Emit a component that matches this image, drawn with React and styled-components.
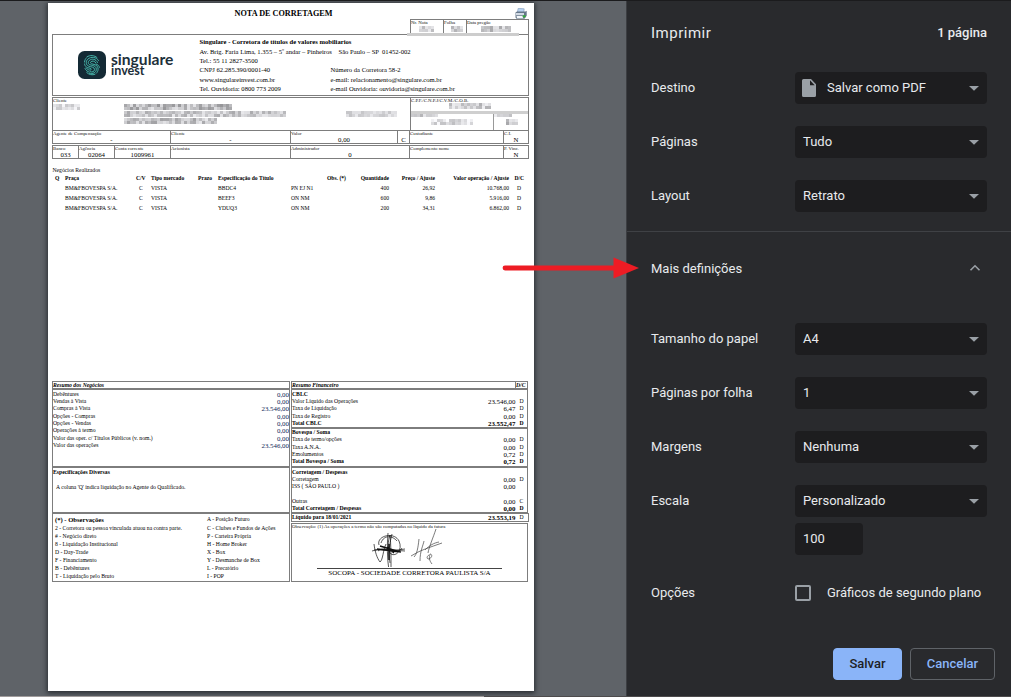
import React from "react";
import styled, { createGlobalStyle } from "styled-components";

const GlobalStyle = createGlobalStyle`
  * { box-sizing: border-box; }
  body { margin: 0; overflow: hidden; background: #5f6368; }
`;

const line = "#7d7d7d";

const Window = styled.div`
  position: relative;
  width: 1011px;
  height: 697px;
  display: grid;
  grid-template-columns: 626px 385px;
  grid-template-rows: 695px 1px;
  border-top: 1px solid #1b1b1d;
  overflow: hidden;
`;

const Preview = styled.main`
  background: #5f6368;
  padding: 2px 0 0 48px;
  overflow: hidden;
`;

const StatusLight = styled.div`
  background: linear-gradient(to right, #a09c9c 484px, #4d4b4c 484px);
`;
const StatusDark = styled.div`
  background: #4d4b4c;
`;

const Sheet = styled.article`
  position: relative;
  width: 486px;
  height: 688px;
  padding-left: 4px;
  background: #fff;
  color: #000;
  box-shadow: 0 1px 5px 1px rgba(20, 24, 28, 0.75);
  font-family: "Liberation Serif", serif;
  font-size: 5.68px;
  display: flex;
  flex-direction: column;
`;

const TitleRow = styled.header`
  display: grid;
  grid-template-columns: 463px 14px;
  height: 16px;
`;
const Title = styled.h1`
  margin: 0;
  padding-top: 6px;
  text-align: center;
  font-size: 8.2px;
  line-height: 9px;
  color: #000;
`;

const Row = styled.div`
  display: grid;
  grid-template-columns: ${(p) => p.$cols};
  width: ${(p) => p.$w || 477}px;
  height: ${(p) => p.$h}px;
  margin-left: ${(p) => p.$ml || 0}px;
  margin-top: ${(p) => p.$mt || 0}px;
`;

const Cell = styled.div`
  min-width: 0;
  border: 1px solid ${line};
  border-left-width: ${(p) => (p.$noLeft ? 0 : 1)}px;
  border-bottom-width: ${(p) => (p.$open ? 0 : 1)}px;
  white-space: nowrap;
`;

const Tiny = styled.div`
  font-size: 4.85px;
  line-height: 5px;
  height: 5px;
  white-space: nowrap;
  color: #111;
`;
const Value = styled.div`
  font-size: 6.8px;
  line-height: 7px;
  text-align: center;
`;

const Text = styled.div`
  font-size: ${(p) => p.$size || 5.68}px;
  line-height: ${(p) => p.$lh || 7.35}px;
  height: ${(p) => p.$lh || 7.35}px;
  font-weight: ${(p) => (p.$b ? 700 : 400)};
  font-style: ${(p) => (p.$i ? "italic" : "normal")};
  padding-left: ${(p) => p.$pl || 0}px;
  margin-top: ${(p) => p.$mt || 0}px;
  white-space: pre;
`;

const Letterhead = styled.div`
  display: grid;
  grid-template-columns: 146.5px 1fr;
  width: 477px;
  height: 62px;
  border: 1px solid ${line};
`;
const Brand = styled.div`
  display: flex;
  align-items: flex-start;
  padding: 16px 0 0 25px;
  gap: 5px;
`;
const Wordmark = styled.div`
  font-family: Lato, sans-serif;
  font-weight: 700;
  color: #1d2f3a;
  padding-top: 2px;
`;
const WordTop = styled.div`
  font-size: 15.6px;
  line-height: 13px;
`;
const WordBottom = styled.div`
  font-size: 12.6px;
  line-height: 9px;
`;
const RedactionBar = styled.div`
  position: absolute;
  left: 359px;
  top: 30px;
  width: 112px;
  height: 3px;
  background: #cdcdcd;
`;

const Columns = styled.div`
  display: grid;
  grid-template-columns: ${(p) => p.$cols};
`;

const ClientFields = styled.div`
  display: grid;
  grid-template-columns: 71px 222px 64px;
`;
const RedactedStack = styled.div`
  padding-top: ${(p) => p.$pt || 0}px;
  padding-left: ${(p) => p.$pl || 0}px;
  display: flex;
  flex-direction: column;
  gap: 1px;
  svg { display: block; }
`;
const DocFields = styled.div`
  height: 16px;
  border-bottom: 3px solid #cfcfcf;
`;
const NumberFields = styled.div`
  display: grid;
  grid-template-columns: 82px 1fr;
  height: 16px;
  & > div + div { border-left: 1px solid #999; }
`;

const Trades = styled.section`
  margin-top: 7.5px;
  height: 214px;
`;
const TradeRow = styled.div`
  display: grid;
  grid-template-columns: 13px 71px 15px 47px 20px 73px 36px 62px 46px 74px 19px;
  font-size: 5.6px;
  line-height: 10px;
  height: 10px;
  margin-top: ${(p) => (p.$head ? -0.6 : 0)}px;
  font-weight: ${(p) => (p.$head ? 700 : 400)};
  white-space: nowrap;
`;
const Td = styled.span`
  display: flex;
  justify-content: ${(p) => (p.$r ? "flex-end" : "flex-start")};
  padding-left: ${(p) => p.$pl || 0}px;
`;

const Summary = styled.section`
  display: grid;
  grid-template-columns: 238px 237px;
  gap: 1px;
`;
const Side = styled.div`
  display: flex;
  flex-direction: column;
`;
const Panel = styled.div`
  height: ${(p) => p.$h}px;
  width: ${(p) => (p.$wide ? "238px" : "auto")};
  margin-top: ${(p) => p.$mt || 0}px;
  border: 1px solid ${line};
  padding-top: ${(p) => p.$pt || 0}px;
  white-space: nowrap;
`;
const Entry = styled.div`
  display: grid;
  grid-template-columns: ${(p) => (p.$dc ? "173.5px 50px 11.5px" : "1fr 50px")};
  height: ${(p) => p.$lh || 7.35}px;
  line-height: ${(p) => p.$lh || 7.35}px;
  margin-top: ${(p) => p.$mt || 0}px;
  font-weight: ${(p) => (p.$b ? 700 : 400)};
`;
const Amount = styled.span`
  font-size: 6.9px;
  text-align: right;
  color: ${(p) => (p.$blue ? "#0c1e58" : "#000")};
`;
const Flag = styled.span`
  padding-left: 4px;
  font-weight: ${(p) => (p.$plain ? 400 : "inherit")};
`;
const SignArea = styled.div`
  display: flex;
  flex-direction: column;
  align-items: center;
  height: 52px;
`;
const SignLine = styled.div`
  width: 185px;
  margin-top: 1px;
  border-top: 1px solid #444;
  text-align: center;
  font-size: 7px;
  line-height: 8px;
`;

const Sidebar = styled.aside`
  background: #292a2d;
  border-left: 1px solid #3c3e42;
  color: #e8eaed;
  font-family: Roboto, sans-serif;
  font-size: 13px;
  padding: 0 24px;
  display: flex;
  flex-direction: column;
`;
const PanelHead = styled.div`
  height: 60px;
  padding-top: 3px;
  display: flex;
  align-items: center;
  justify-content: space-between;
`;
const PanelTitle = styled.h2`
  margin: 0;
  font-size: 15px;
  font-weight: 400;
  letter-spacing: 0.5px;
`;
const PageCount = styled.span`
  font-weight: 500;
`;
const Label = styled.span`
  padding-bottom: 2px;
`;
const Setting = styled.div`
  display: grid;
  grid-template-columns: 144px 192px;
  align-items: center;
  height: 54px;
`;
const Select = styled.div`
  height: 32px;
  border-radius: 4px;
  background: #1d1d1f;
  display: flex;
  align-items: center;
  padding: 0 8px;
  width: ${(p) => p.$w || 192}px;
  svg { flex: none; }
`;
const SelectText = styled.span`
  flex: 1;
  padding-bottom: 2px;
  padding-left: ${(p) => p.$pl || 0}px;
`;
const Divider = styled.hr`
  width: 384px;
  margin: 8px 0 0 -24px;
  border: 0;
  flex: none;
  height: 1px;
  background: #3f4145;
`;
const MoreRow = styled.div`
  height: 80px;
  padding: 0 6px 7px 0;
  display: flex;
  align-items: center;
  justify-content: space-between;
  svg { margin-top: -2px; }
`;
const ScaleInput = styled.div`
  padding-left: 144px;
  margin-top: -5px;
`;
const Options = styled(Setting)`
  margin-top: 11px;
`;
const Option = styled.div`
  display: flex;
  align-items: center;
  gap: 16px;
  padding-bottom: 1px;
  white-space: nowrap;
`;
const Checkbox = styled.span`
  width: 16px;
  height: 16px;
  border: 2px solid #9aa0a6;
  border-radius: 2px;
`;
const Actions = styled.div`
  display: flex;
  justify-content: flex-end;
  gap: 8px;
  margin: 28px -8px 0 0;
`;
const Button = styled.button`
  font: 500 13px Roboto, sans-serif;
  height: 32px;
  width: ${(p) => (p.$primary ? 69 : 85)}px;
  padding: 0 0 2px;
  border-radius: 4px;
  border: 1px solid ${(p) => (p.$primary ? "#8ab4f8" : "#5f6368")};
  background: ${(p) => (p.$primary ? "#8ab4f8" : "transparent")};
  color: ${(p) => (p.$primary ? "#202124" : "#8ab4f8")};
`;

const Arrow = styled.svg`
  position: absolute;
  left: 500px;
  top: 253px;
`;

function Mosaic({ w, h = 6, seed = 1, dark = 150, bg = 225 }) {
  const size = 3;
  const cells = [];
  let s = seed * 7919;
  for (let y = 0; y < h; y += size) {
    for (let x = 0; x < w; x += size) {
      s = (s * 1103515245 + 12345) % 2147483648;
      const v = Math.min(255, Math.round(dark + (s / 2147483648) * (bg - dark + 10)));
      cells.push(
        <rect key={x + "-" + y} x={x} y={y} width={size} height={size}
          fill={`rgb(${v},${v},${Math.min(v + 3, 255)})`} />
      );
    }
  }
  return <svg width={w} height={h} shapeRendering="crispEdges">{cells}</svg>;
}

const Logo = () => (
  <svg width="28" height="28" viewBox="0 0 28 28" fill="none">
    <rect width="28" height="28" rx="6.5" fill="#142a35" />
    <g stroke="#46b5aa" strokeWidth="1" strokeLinecap="round">
      <path d="M9 5.800c3-2 7.500-1.600 10 .8M6.500 11c.2-2 1-3.200 2-4.200" />
      <path d="M20.500 9.500C18.500 6 13 5.200 9.800 8.200c-2.600 2.500-1.800 6 1 7 2.500.9 5.700.7 5.700 3.300 0 2-2.200 3-4.300 2.300" />
      <path d="M19.500 11.500c-1.500-3.600-5.700-4.300-8.200-2-1.800 1.700-1.200 3.700.8 4.300 2.700.8 6.200 1 6.200 4.500 0 3.300-3.500 5-6.800 4" />
      <path d="M17.800 11.800c-1.200-2-3.800-2.300-5-.9-.7.900 0 1.600 1 1.900 3 .8 6.300 1.500 6.300 5.300 0 1.700-.7 3.100-1.700 4.100" />
      <path d="M6.500 13c.5 3.200 3 3.700 5.400 4.200 1.700.4 1.800 1.400.6 1.800-1.500.4-3-.5-4.300-2M7 17.500c1 2 2.600 3.200 4.200 3.600M8.700 21.500c2.200 2.200 5.600 3 8.300 1.800" />
      <path d="M18 13c1.800.6 3 1.700 3.500 3.300" />
    </g>
  </svg>
);

const PrinterArt = styled.svg`
  margin-top: 5px;
`;
const Printer = () => (
  <PrinterArt width="12" height="11" viewBox="0 0 12 11">
    <path d="M3.200.3 9.200.8l-.5 4.200h-6.500z" fill="#b9d2f0" stroke="#7e98b8" strokeWidth=".6" />
    <path d="M.5 4.600 2 3.500h8.500l1.200-.8v5L9.500 10.700h-8L.5 9.500z" fill="#667789" />
    <path d="M.8 5h8.200v2.300H.8z" fill="#d3dbe5" />
    <path d="M1.500 8h6l.8 2.200H2z" fill="#f4f7fa" />
    <path d="M7.800 7.300h2.700v2H7.800z" fill="#2fae35" />
  </PrinterArt>
);

const Caret = () => (
  <svg width="10" height="6" viewBox="0 0 10 6"><path d="M0 1h10L5 5.800z" fill="#9aa0a6" /></svg>
);

const Signature = () => (
  <svg width="185" height="38" viewBox="0 0 185 38" fill="none" stroke="#111" strokeWidth=".7">
    <path d="M55 22c5-2 20-1 33 0M57 21c8-2 14 2 31-1M62 16c-3-9 15-14 20-4 4 9-3 16-8 13-4-3-3-14-1-19 1 9 1 22 1 32" />
    <path d="M71 4c-1 12-1 24 1 38M75 5c-2 8-4 17-2 29M64 14c3-9 12-7 16-2M57 15c1 8 3 14 6 18 3-2 3-12 6-18M61 22c8-7 18 7 24-3" />
    <path d="M60 20l24 3M63 17l20 6M72 15v16M70 18l7 6" strokeWidth="1.500" />
    <path d="M102 10c-1 9-2 15-5 18M107 12c-1 5-4 10-4 20M94 27c9-6 20-9 31-13M119 0c-3 9-7 18-8 24M112 26c-2 1-3 4 0 4 4-2 3-5 1-5-1 4-1 6 2 10M108 21c5-5 9-7 14-8" stroke="#444" strokeWidth=".7" />
  </svg>
);

function Picker({ label, value, icon }) {
  return (
    <Setting>
      <Label>{label}</Label>
      <Select>
        {icon}
        <SelectText $pl={icon ? 11 : 0}>{value}</SelectText>
        <Caret />
      </Select>
    </Setting>
  );
}

const FileArt = styled.svg`
  margin-left: -1px;
`;
const FileIcon = () => (
  <FileArt width="14" height="18" viewBox="0 0 14 18">
    <path d="M1.500 0H9l5 5.200v11.300a1.500 1.500 0 0 1-1.500 1.500h-11A1.500 1.500 0 0 1 0 16.500v-15A1.500 1.500 0 0 1 1.500 0z" fill="#9aa0a6" />
    <path d="M8 1.300v4.900h4.700z" fill="#1d1d1f" />
  </FileArt>
);

const trades = [
  ["BBDC4", "PN EJ N1", "400", "26,92", "10.768,00"],
  ["BEEF3", "ON NM", "600", "9,86", "5.916,00"],
  ["YDUQ3", "ON NM", "200", "34,31", "6.862,00"],
];
const business = [
  ["Debêntures", "0,00"],
  ["Vendas à Vista", "0,00"],
  ["Compras à Vista", "23.546,00"],
  ["Opções - Compras", "0,00"],
  ["Opções - Vendas", "0,00"],
  ["Operações à termo", "0,00"],
  ["Valor das oper. c/ Títulos Públicos (v. nom.)", "0,00"],
  ["Valor das operações", "23.546,00"],
];
const notes = [
  ["2 - Corretora ou pessoa vinculada atuou na contra parte.", "C - Clubes e Fundos de Ações"],
  ["# - Negócio direto", "P - Carteira Própria"],
  ["8 - Liquidação Institucional", "H - Home Broker"],
  ["D - Day-Trade", "X - Box"],
  ["F - Financiamento", "Y - Desmanche de Box"],
  ["B - Debêntures", "L - Precatório"],
  ["T - Liquidação pelo Bruto", "I - POP"],
];

function Money({ label, value, flag, bold, mt }) {
  return (
    <Entry $dc $b={bold} $mt={mt}>
      <span>{label}</span>
      <Amount>{value}</Amount>
      <Flag>{flag}</Flag>
    </Entry>
  );
}

function Note() {
  return (
    <Sheet>
      <TitleRow>
        <Title>NOTA DE CORRETAGEM</Title>
        <Printer />
      </TitleRow>
      <Row $cols="34px 23px 62px" $w={119} $ml={358} $h={15}>
        {["Nr. Nota", "Folha", "Data pregão"].map((t, i) => (
          <Cell key={t} $noLeft={i > 0} $open>
            <Tiny>{t}</Tiny>
            <RedactedStack $pt={1} $pl={[8, 7, 14][i]}>
              <Mosaic w={[15, 12, 30][i]} seed={i + 3} dark={170} />
            </RedactedStack>
          </Cell>
        ))}
      </Row>
      <Letterhead>
        <Brand>
          <Logo />
          <Wordmark>
            <WordTop>singulare</WordTop>
            <WordBottom>invest</WordBottom>
          </Wordmark>
        </Brand>
        <div>
          <Text $b $size={6.6} $lh={9.35} $mt={2.4}>Singulare - Corretora de títulos de valores mobiliarios</Text>
          <Text $size={6.6} $lh={9.35}>{"Av. Brig. Faria Lima, 1.355 – 5º andar – Pinheiros    São Paulo – SP  01452-002"}</Text>
          <Text $size={6.6} $lh={9.35}>Tel.: 55 11 2827-3500</Text>
          {[
            ["CNPJ 62.285.390/0001-40", "Número da Corretora 58-2"],
            ["www.singulareinvest.com.br", "e-mail: relacionamento@singulare.com.br"],
            ["Tel. Ouvidoria: 0800 773 2009", "e-mail Ouvidoria: ouvidoria@singulare.com.br"],
          ].map(([a, b]) => (
            <Columns key={a} $cols="131px 1fr">
              <Text $size={6.6} $lh={9.35}>{a}</Text>
              <Text $size={6.6} $lh={9.35}>{b}</Text>
            </Columns>
          ))}
        </div>
      </Letterhead>
      <RedactionBar />
      <Row $cols="359px 118px" $h={34} $mt={1}>
        <Cell>
          <ClientFields>
            <RedactedStack>
              <Tiny>Cliente</Tiny>
              <Mosaic w={27} h={6} seed={9} dark={190} bg={240} />
            </RedactedStack>
            <RedactedStack $pt={6}>
              <Mosaic w={108} h={6} seed={11} dark={150} bg={220} />
              <Mosaic w={162} h={6} seed={12} dark={170} />
              <Mosaic w={93} h={6} seed={13} dark={160} />
            </RedactedStack>
            <RedactedStack $pt={13}>
              <Mosaic w={51} h={6} seed={14} dark={195} />
            </RedactedStack>
          </ClientFields>
        </Cell>
        <Cell $noLeft>
          <DocFields>
            <Tiny>C.P.F./C.N.P.J/C.V.M./C.O.B.</Tiny>
            <RedactedStack $pl={38}>
              <Mosaic w={42} h={6} seed={21} dark={175} bg={240} />
            </RedactedStack>
          </DocFields>
          <NumberFields>
            <div>
              <RedactedStack><Mosaic w={27} h={3} seed={22} dark={180} /></RedactedStack>
              <RedactedStack $pl={20} $pt={2}><Mosaic w={42} h={6} seed={23} dark={190} bg={250} /></RedactedStack>
            </div>
            <div>
              <RedactedStack><Mosaic w={18} h={3} seed={24} dark={190} /></RedactedStack>
              <RedactedStack $pl={12} $pt={2}><Mosaic w={12} h={6} seed={25} dark={160} /></RedactedStack>
            </div>
          </NumberFields>
        </Cell>
      </Row>
      <Row $cols="119px 120px 107px 12px 94px 25px" $h={14} $mt={-1}>
        <Cell><Tiny>Agente de Compensação</Tiny><Value>-</Value></Cell>
        <Cell $noLeft><Tiny>Cliente</Tiny><Value>-</Value></Cell>
        <Cell $noLeft><Tiny>Valor</Tiny><Value>0,00</Value></Cell>
        <Cell $noLeft><Tiny /><Value>C</Value></Cell>
        <Cell $noLeft><Tiny>Custodiante</Tiny></Cell>
        <Cell $noLeft><Tiny>C.I.</Tiny><Value>N</Value></Cell>
      </Row>
      <Row $cols="27px 36px 56px 120px 119px 94px 25px" $h={14} $mt={1}>
        <Cell><Tiny>Banco</Tiny><Value>033</Value></Cell>
        <Cell $noLeft><Tiny>Agência</Tiny><Value>02064</Value></Cell>
        <Cell $noLeft><Tiny>Conta corrente</Tiny><Value>1009961</Value></Cell>
        <Cell $noLeft><Tiny>Acionista</Tiny></Cell>
        <Cell $noLeft><Tiny>Administrador</Tiny><Value>0</Value></Cell>
        <Cell $noLeft><Tiny>Complemento nome</Tiny></Cell>
        <Cell $noLeft><Tiny>P. Vinc.</Tiny><Value>N</Value></Cell>
      </Row>

      <Trades>
        <Text $lh={7} $pl={0.5}>Negócios Realizados</Text>
        <TradeRow $head>
          <Td $pl={3}>Q</Td><Td>Praça</Td><Td>C/V</Td><Td>Tipo mercado</Td><Td>Prazo</Td>
          <Td>Especificação do Título</Td><Td $pl={36}>Obs. (*)</Td><Td $r>Quantidade</Td>
          <Td $r>Preço / Ajuste</Td><Td $r>Valor operação / Ajuste</Td><Td $pl={5.5}>D/C</Td>
        </TradeRow>
        {trades.map(([code, kind, qty, price, total]) => (
          <TradeRow key={code}>
            <Td /><Td>BM&amp;FBOVESPA S/A.</Td><Td $pl={3}>C</Td><Td>VISTA</Td><Td />
            <Td>{code}</Td><Td>{kind}</Td><Td $r>{qty}</Td><Td $r>{price}</Td><Td $r>{total}</Td><Td $pl={8}>D</Td>
          </TradeRow>
        ))}
      </Trades>

      <Summary>
        <Side>
          <Panel $h={8}><Text $b $i $lh={6.5}>Resumo dos Negócios</Text></Panel>
          <Panel $h={78} $pt={1}>
            {business.map(([label, value]) => (
              <Entry key={label}>
                <span>{label}</span>
                <Amount $blue>{value}</Amount>
              </Entry>
            ))}
          </Panel>
          <Panel $h={46} $pt={1}>
            <Text $b>Especificações Diversas</Text>
            <Text $pl={3} $mt={8}>A coluna 'Q' indica liquidação no Agente do Qualificado.</Text>
          </Panel>
          <Panel $h={69} $pt={1}>
            <Columns $cols="154px 1fr">
              <Text $b $size={6.6} $lh={9.3} $pl={2}>(*) - Observações</Text>
              <Text $lh={8}>A - Posição Futuro</Text>
            </Columns>
            {notes.map(([a, b]) => (
              <Columns key={a} $cols="154px 1fr">
                <Text $lh={8} $pl={2}>{a}</Text>
                <Text $lh={8}>{b}</Text>
              </Columns>
            ))}
          </Panel>
        </Side>
        <Side>
          <Row $cols="225px 12px" $w={237} $h={8}>
            <Cell><Text $b $i $lh={6.5}>Resumo Financeiro</Text></Cell>
            <Cell $noLeft><Text $b $i $lh={6.5}>D/C</Text></Cell>
          </Row>
          <Panel $h={39} $pt={1}>
            <Text $b>CBLC</Text>
            <Money label="Valor Líquido das Operações" value="23.546,00" flag="D" />
            <Money label="Taxa de Liquidação" value="6,47" flag="D" />
            <Money label="Taxa de Registro" value="0,00" flag="D" />
            <Money bold label="Total CBLC" value="23.552,47" flag="D" />
          </Panel>
          <Panel $h={39} $pt={0.5}>
            <Text $b>Bovespa / Soma</Text>
            <Money label="Taxa de termo/opções" value="0,00" flag="D" />
            <Money label="Taxa A.N.A." value="0,00" flag="D" />
            <Money label="Emolumentos" value="0,72" flag="D" />
            <Money bold label="Total Bovespa / Soma" value="0,72" flag="D" />
          </Panel>
          <Panel $h={46} $pt={1}>
            <Text $b>Corretagem / Despesas</Text>
            <Money label="Corretagem" value="0,00" flag="D" />
            <Money label="ISS ( SÃO PAULO )" value="0,00" flag="" />
            <Money mt={7.35} label="Outras" value="0,00" flag="C" />
            <Money bold label="Total Corretagem / Despesas" value="0,00" flag="D" />
          </Panel>
          <Panel $h={9} $wide $pt={0.5}>
            <Entry $dc $b $lh={7}><span>Líquido para 18/01/2021</span><Amount>23.553,19</Amount><Flag $plain>D</Flag></Entry>
          </Panel>
          <Panel $h={59} $mt={1}>
            <Tiny>Observação: (1) As operações a termo não são computadas no líquido da fatura</Tiny>
            <SignArea>
              <Signature />
              <SignLine>SOCOPA - SOCIEDADE CORRETORA PAULISTA S/A</SignLine>
            </SignArea>
          </Panel>
        </Side>
      </Summary>
    </Sheet>
  );
}

export default function App() {
  return (
    <>
      <GlobalStyle />
      <Window>
        <Preview><Note /></Preview>
        <Sidebar>
          <PanelHead>
            <PanelTitle>Imprimir</PanelTitle>
            <PageCount>1 página</PageCount>
          </PanelHead>
          <Picker label="Destino" value="Salvar como PDF" icon={<FileIcon />} />
          <Picker label="Páginas" value="Tudo" />
          <Picker label="Layout" value="Retrato" />
          <Divider />
          <MoreRow>
            <span>Mais definições</span>
            <svg width="12" height="8" viewBox="0 0 12 8" fill="none"><path d="M1.500 6.300 6 1.800l4.500 4.500" stroke="#9aa0a6" strokeWidth="1.600" /></svg>
          </MoreRow>
          <Picker label="Tamanho do papel" value="A4" />
          <Picker label="Páginas por folha" value="1" />
          <Picker label="Margens" value="Nenhuma" />
          <Picker label="Escala" value="Personalizado" />
          <ScaleInput><Select $w={68}><SelectText>100</SelectText></Select></ScaleInput>
          <Options>
            <Label>Opções</Label>
            <Option><Checkbox />Gráficos de segundo plano</Option>
          </Options>
          <Actions>
            <Button $primary>Salvar</Button>
            <Button>Cancelar</Button>
          </Actions>
        </Sidebar>
        <StatusLight />
        <StatusDark />
        <Arrow width="142" height="28" viewBox="0 0 142 28">
          <path d="M5 14h112" stroke="#ed1c24" strokeWidth="4.800" strokeLinecap="round" />
          <path d="M113.500 3.500v21L139 14z" fill="#ed1c24" />
        </Arrow>
      </Window>
    </>
  );
}
